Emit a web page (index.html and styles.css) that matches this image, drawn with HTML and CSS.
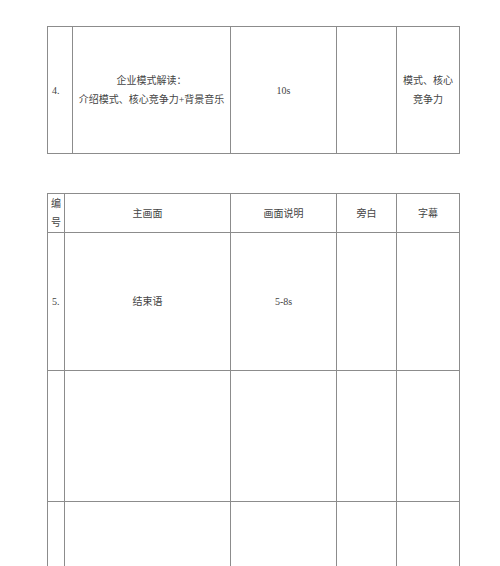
FILE: index.html
```html
<!DOCTYPE html>
<html lang="zh-CN">
<head>
<meta charset="utf-8">
<title>分镜表</title>
<link rel="stylesheet" href="styles.css">
</head>
<body>
<div class="page">
  <table class="sheet sheet-a">
    <colgroup>
      <col class="c-no-a"><col class="c-main-a"><col class="c-desc"><col class="c-voice"><col class="c-sub">
    </colgroup>
    <tr class="row-a">
      <td class="num">4.</td>
      <td>企业模式解读：<br>介绍模式、核心竞争力+背景音乐</td>
      <td>10s</td>
      <td></td>
      <td>模式、核心<br>竞争力</td>
    </tr>
  </table>

  <table class="sheet sheet-b">
    <colgroup>
      <col class="c-no-b"><col class="c-main-b"><col class="c-desc"><col class="c-voice"><col class="c-sub">
    </colgroup>
    <tr class="row-head">
      <td class="num-head">编<br>号</td>
      <td>主画面</td>
      <td>画面说明</td>
      <td>旁白</td>
      <td>字幕</td>
    </tr>
    <tr class="row-5">
      <td class="num">5.</td>
      <td>结束语</td>
      <td>5-8s</td>
      <td></td>
      <td></td>
    </tr>
    <tr class="row-empty">
      <td></td><td></td><td></td><td></td><td></td>
    </tr>
    <tr class="row-last">
      <td></td><td></td><td></td><td></td><td></td>
    </tr>
  </table>
</div>
</body>
</html>
```

FILE: styles.css
```css
html, body {
  margin: 0;
  padding: 0;
  background: #ffffff;
}

body {
  font-family: "Liberation Serif", "Noto Sans CJK SC", serif;
  font-size: 10px;
  color: #444444;
  overflow: hidden;
}

.page {
  width: 500px;
  height: 566px;
  padding: 26px 0 0 47px;
  box-sizing: border-box;
}

.sheet {
  border-collapse: collapse;
  table-layout: fixed;
  width: 413px;
}

.sheet td {
  border: 1px solid #8c8c8c;
  padding: 0;
  text-align: center;
  vertical-align: middle;
  line-height: 19px;
}

.sheet td.num {
  text-align: left;
  padding-left: 4px;
}

.sheet-b {
  margin-top: 39px;
}

.c-no-a { width: 25px; }
.c-main-a { width: 158px; }
.c-no-b { width: 17px; }
.c-main-b { width: 166px; }
.c-desc { width: 106px; }
.c-voice { width: 60px; }
.c-sub { width: 63px; }

.row-a { height: 127px; }
.row-head { height: 39px; }
.row-5 { height: 138px; }
.row-empty { height: 131px; }
.row-last { height: 90px; }
```
